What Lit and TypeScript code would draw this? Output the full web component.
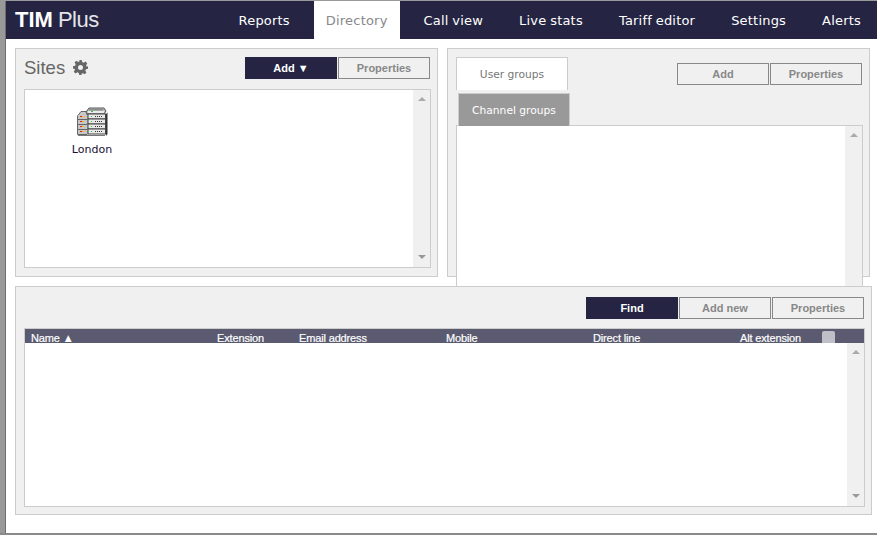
import { LitElement, html, css, svg } from "lit";
import { customElement } from "lit/decorators.js";

const NAV = ["Reports", "Directory", "Call view", "Live stats", "Tariff editor", "Settings", "Alerts"];
const COLS = [
  { name: "Name ▲", w: 186 },
  { name: "Extension", w: 82 },
  { name: "Email address", w: 147 },
  { name: "Mobile", w: 147 },
  { name: "Direct line", w: 147 },
  { name: "Alt extension", w: 82 },
];

const serverIcon = svg`<svg class="server" width="31" height="30" viewBox="0 0 31 30">
  <path d="M0.5 9 L4 4.5 H10 V27.5 H0.5 Z" fill="#c9c9c9" stroke="#666" stroke-width="1"/>
  <path d="M9 5 L12 1 H27 L29 4 L27 7 H10 Z" fill="#bcbcbc" stroke="#555" stroke-width="1"/>
  <rect x="12" y="1.5" width="14" height="2" fill="#8d8d8d"/>
  <rect x="11" y="4" width="16" height="2" fill="#ececec"/>
  <rect x="14" y="4" width="2" height="1" fill="#22cc44"/>
  ${[9, 14, 19, 24].map(
    (y) => svg`
    <rect x="1" y="${y - 1}" width="9" height="4" fill="#c6c6c6"/>
    <rect x="1" y="${y + 3}" width="9" height="1" fill="#666"/>
    <rect x="3" y="${y}" width="2" height="1" fill="#e02020"/>
    <rect x="5" y="${y}" width="2" height="1" fill="#e8c020"/>
    <rect x="11" y="${y - 2}" width="17.5" height="5" fill="#e8e8e8" stroke="#444" stroke-width="1"/>
    <rect x="14" y="${y}" width="1" height="1" fill="#22cc44"/>
    <path d="M18 ${y + 0.5} H26" stroke="#333" stroke-width="1" stroke-dasharray="1 1"/>`
  )}
  <path d="M29 7 L30.5 5.5 V27 L29 29 Z" fill="#333"/>
  <rect x="1" y="28" width="27" height="1" fill="#777"/>
</svg>`;

const gearIcon = svg`<svg class="gear" width="15" height="15" viewBox="0 0 24 24">
  <path fill="#666" fill-rule="evenodd" d="M10 0h4l.7 3.3 2.4 1 2.9-1.8 2.8 2.8-1.8 2.9 1 2.4L24 10v4l-3.3.7-1 2.4 1.8 2.9-2.8 2.8-2.9-1.8-2.4 1L14 24h-4l-.7-3.3-2.4-1-2.9 1.8-2.8-2.8 1.8-2.9-1-2.4L0 14v-4l3.3-.7 1-2.4-1.8-2.9 2.8-2.8 2.9 1.8 2.4-1z M12 8a4 4 0 1 0 0 8a4 4 0 1 0 0-8z"/>
</svg>`;

@customElement("app-root")
export class AppRoot extends LitElement {
  static styles = css`
    :host {
      display: block;
      width: 877px;
      height: 535px;
      box-sizing: border-box;
      background: #fff;
      border-top: 1px solid #999;
      border-bottom: 2px solid #8a8a8a;
      font-family: "Liberation Sans", Arial, sans-serif;
      overflow: hidden;
    }
    .frame {
      display: flex;
      height: 100%;
    }
    .rail {
      width: 5px;
      flex: none;
      background: #999;
      border-right: 1px solid #6e6e6e;
    }
    .page {
      flex: 1;
      min-width: 0;
    }
    .nav {
      display: flex;
      align-items: stretch;
      height: 38px;
      background: #252543;
      padding-left: 9px;
      padding-right: 4px;
    }
    .logo {
      flex: 1;
      display: flex;
      align-items: center;
      gap: 5px;
      color: #fff;
      font-size: 22px;
    }
    .logo b {
      font-weight: 700;
    }
    .logo span {
      font-weight: 400;
      color: #e4e4ea;
      letter-spacing: -0.5px;
    }
    .nav-items {
      display: flex;
      gap: 12px;
    }
    .nav-item {
      display: flex;
      align-items: center;
      padding: 0 12px;
      color: #fff;
      font-family: "DejaVu Sans", Verdana, sans-serif;
      font-size: 13px;
      letter-spacing: 0.2px;
      word-spacing: -0.6px;
    }
    .nav-item.active {
      background: #fff;
      color: #888;
    }
    .content {
      padding: 9px 0 0 9px;
    }
    .top {
      display: grid;
      grid-template-columns: 423px 423px;
      grid-template-rows: 229px;
      column-gap: 9px;
      margin-bottom: 9px;
    }
    .panel {
      box-sizing: border-box;
      height: 229px;
      background: #f0f0f0;
      border: 1px solid #ccc;
      padding: 8px 6px 0 8px;
    }
    .panel.bottom {
      position: relative;
      width: 857px;
      padding-top: 10px;
    }
    .head {
      display: flex;
      justify-content: space-between;
      align-items: flex-start;
      height: 22px;
      margin-bottom: 10px;
    }
    .panel.bottom .head {
      justify-content: flex-end;
      margin-bottom: 9px;
    }
    .title {
      display: flex;
      align-items: center;
      gap: 8px;
      color: #666;
      font-size: 18.5px;
      line-height: 21px;
    }
    .buttons {
      display: flex;
      gap: 1px;
      margin-right: 1px;
    }
    .btn {
      box-sizing: border-box;
      width: 92px;
      height: 22px;
      border: 1px solid #888;
      background: #f0f0f0;
      color: #888;
      font-size: 11px;
      font-weight: 700;
      line-height: 20px;
      text-align: center;
    }
    .btn.primary {
      background: #252543;
      border-color: #252543;
      color: #fff;
    }
    .list {
      box-sizing: border-box;
      display: flex;
      background: #fff;
      border: 1px solid #ccc;
    }
    .list.sites {
      height: 179px;
    }
    .list.groups {
      height: 180px;
    }
    .list.people {
      height: 179px;
      flex-direction: column;
    }
    .list-body {
      flex: 1;
      min-width: 0;
    }
    .scroll {
      width: 17px;
      flex: none;
      display: flex;
      flex-direction: column;
      justify-content: space-between;
      align-items: center;
      padding: 7px 0 8px;
      box-sizing: border-box;
      background: #f0f0f0;
    }
    .arrow {
      width: 0;
      height: 0;
      border-left: 4px solid transparent;
      border-right: 4px solid transparent;
    }
    .arrow.up {
      border-bottom: 4px solid #aaa;
    }
    .arrow.down {
      border-top: 4px solid #999;
    }
    .site {
      display: flex;
      flex-direction: column;
      align-items: center;
      width: 70px;
      margin: 17px 0 0 32px;
      color: #1a1033;
      font-family: "DejaVu Sans", Verdana, sans-serif;
      font-size: 11px;
    }
    .server {
      display: block;
      margin-bottom: 6px;
    }
    .gear {
      display: block;
    }
    .right-head {
      display: flex;
      justify-content: space-between;
      align-items: flex-start;
    }
    .tabs {
      display: flex;
      flex-direction: column;
      gap: 3px;
      margin-bottom: -1px;
    }
    .tab {
      box-sizing: border-box;
      width: 112px;
      height: 33px;
      display: flex;
      align-items: center;
      justify-content: center;
      font-family: "DejaVu Sans", Verdana, sans-serif;
      font-size: 10.7px;
    }
    .tab.on {
      background: #fff;
      color: #777;
      border: 1px solid #ccc;
      border-bottom: none;
    }
    .tab.off {
      margin-left: 2px;
      background: #999;
      color: #fff;
      border: 1px solid #ccc;
      border-bottom: none;
    }
    .right-head .buttons {
      margin-top: 6px;
    }
    .thead {
      display: flex;
      align-items: flex-start;
      flex: none;
      height: 14px;
      overflow: hidden;
      background: #5a5a70;
      color: #fff;
      font-size: 11px;
      letter-spacing: -0.15px;
      -webkit-text-stroke: 0.2px #fff;
      line-height: 18px;
      padding-left: 6px;
    }
    .thead div {
      flex: none;
      white-space: nowrap;
    }
    .check {
      flex: none;
      box-sizing: border-box;
      width: 13px;
      height: 14px;
      margin: 2px 0 0 0;
      border-radius: 2px;
      background: #bfbfc8;
    }
    .people-body {
      flex: 1;
      min-height: 0;
      display: flex;
    }
  `;

  render() {
    return html`<div class="frame">
      <div class="rail"></div>
      <div class="page">
        <div class="nav">
          <div class="logo"><b>TIM</b><span>Plus</span></div>
          <div class="nav-items">
            ${NAV.map(
              (n) => html`<div class="nav-item ${n === "Directory" ? "active" : ""}">${n}</div>`
            )}
          </div>
        </div>
        <div class="content">
          <div class="top">
            <section class="panel">
              <div class="head">
                <div class="title">Sites ${gearIcon}</div>
                <div class="buttons">
                  <div class="btn primary">Add ▼</div>
                  <div class="btn">Properties</div>
                </div>
              </div>
              <div class="list sites">
                <div class="list-body">
                  <div class="site">${serverIcon}<span>London</span></div>
                </div>
                <div class="scroll"><div class="arrow up"></div><div class="arrow down"></div></div>
              </div>
            </section>
            <section class="panel">
              <div class="right-head">
                <div class="tabs">
                  <div class="tab on">User groups</div>
                  <div class="tab off">Channel groups</div>
                </div>
                <div class="buttons">
                  <div class="btn">Add</div>
                  <div class="btn">Properties</div>
                </div>
              </div>
              <div class="list groups">
                <div class="list-body"></div>
                <div class="scroll"><div class="arrow up"></div></div>
              </div>
            </section>
          </div>
          <section class="panel bottom">
            <div class="head">
              <div class="buttons">
                <div class="btn primary">Find</div>
                <div class="btn">Add new</div>
                <div class="btn">Properties</div>
              </div>
            </div>
            <div class="list people">
              <div class="thead">
                ${COLS.map((c) => html`<div style="width:${c.w}px">${c.name}</div>`)}
                <span class="check"></span>
              </div>
              <div class="people-body">
                <div class="list-body"></div>
                <div class="scroll"><div class="arrow up"></div><div class="arrow down"></div></div>
              </div>
            </div>
          </section>
        </div>
      </div>
    </div>`;
  }
}
